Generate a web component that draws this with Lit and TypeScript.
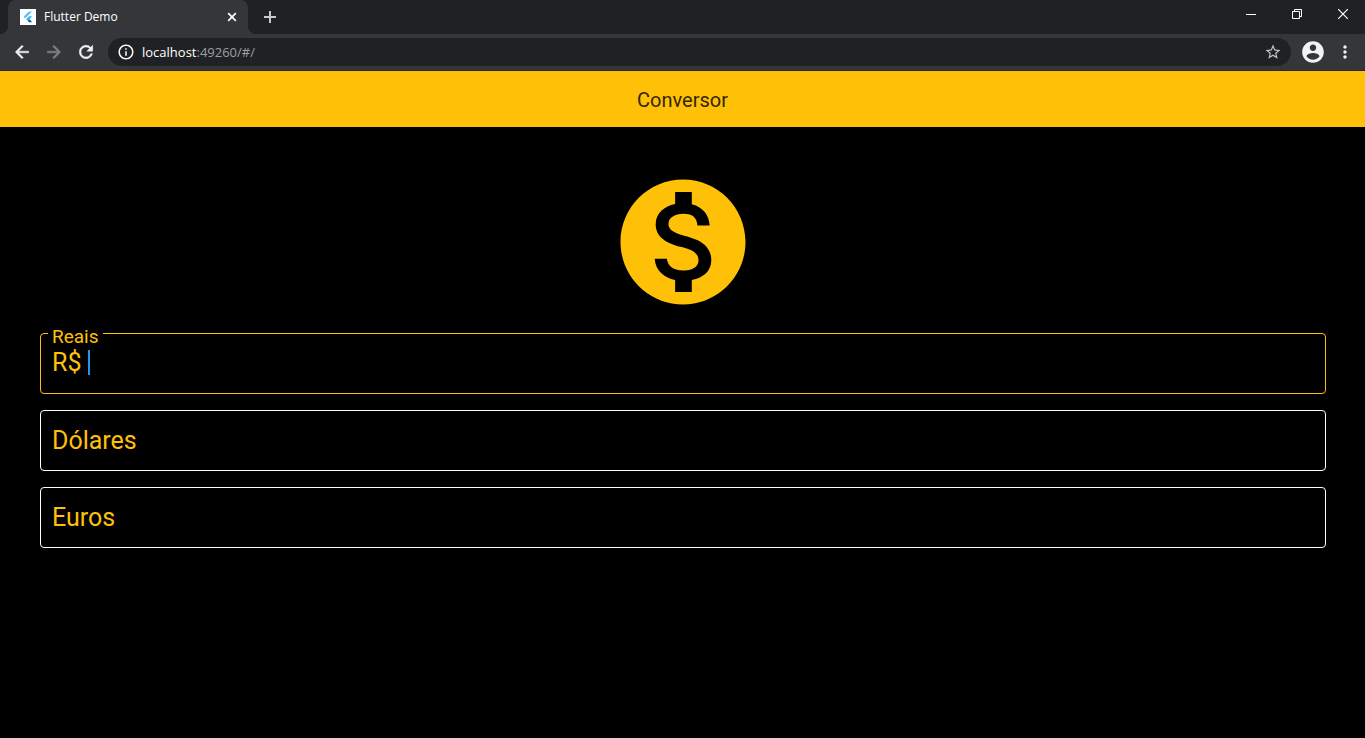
import { LitElement, html, css, svg } from "lit";
import { customElement } from "lit/decorators.js";

const icon = (d: string, cls = "") =>
  html`<svg class=${cls} viewBox="0 0 24 24" aria-hidden="true">${svg`<path d=${d} />`}</svg>`;

const BACK = "M20 11H7.83l5.59-5.59L12 4l-8 8 8 8 1.41-1.41L7.83 13H20v-2z";
const FORWARD = "M12 4l-1.41 1.41L16.17 11H4v2h12.17l-5.58 5.59L12 20l8-8z";
const RELOAD =
  "M17.65 6.35C16.2 4.9 14.21 4 12 4c-4.42 0-7.99 3.58-7.99 8s3.57 8 7.99 8c3.73 0 6.84-2.55 7.73-6h-2.08c-.82 2.33-3.04 4-5.65 4-3.31 0-6-2.69-6-6s2.69-6 6-6c1.66 0 3.14.69 4.22 1.78L13 11h7V4l-2.35 2.35z";
const INFO =
  "M11 17h2v-6h-2v6zm1-15C6.48 2 2 6.48 2 12s4.48 10 10 10 10-4.48 10-10S17.52 2 12 2zm0 18c-4.41 0-8-3.59-8-8s3.59-8 8-8 8 3.59 8 8-3.59 8-8 8zM11 9h2V7h-2v2z";
const STAR =
  "M22 9.24l-7.19-.62L12 2 9.19 8.63 2 9.24l5.46 4.73L5.82 21 12 17.27 18.18 21l-1.63-7.03L22 9.24zM12 15.4l-3.76 2.27 1-4.28-3.32-2.88 4.38-.38L12 6.1l1.71 4.04 4.38.38-3.32 2.88 1 4.28L12 15.4z";
const PERSON =
  "M12 2C6.48 2 2 6.48 2 12s4.48 10 10 10 10-4.48 10-10S17.52 2 12 2zm0 3c1.66 0 3 1.34 3 3s-1.34 3-3 3-3-1.34-3-3 1.34-3 3-3zm0 14.2c-2.5 0-4.71-1.28-6-3.22.03-1.99 4-3.08 6-3.08 1.99 0 5.97 1.09 6 3.08-1.29 1.94-3.5 3.22-6 3.22z";
const MORE =
  "M12 8c1.1 0 2-.9 2-2s-.9-2-2-2-2 .9-2 2 .9 2 2 2zm0 2c-1.1 0-2 .9-2 2s.9 2 2 2 2-.9 2-2-.9-2-2-2zm0 6c-1.1 0-2 .9-2 2s.9 2 2 2 2-.9 2-2-.9-2-2-2z";
const MONEY =
  "M12 2C6.48 2 2 6.48 2 12s4.48 10 10 10 10-4.48 10-10S17.52 2 12 2zm1.41 16.09V20h-2.67v-1.93c-1.71-.36-3.16-1.46-3.27-3.4h1.96c.1 1.05.82 1.87 2.65 1.87 1.96 0 2.4-.98 2.4-1.59 0-.83-.44-1.61-2.67-2.14-2.48-.6-4.18-1.62-4.18-3.67 0-1.72 1.39-2.84 3.11-3.21V4h2.67v1.95c1.86.45 2.79 1.86 2.85 3.39H14.3c-.05-1.11-.64-1.87-2.22-1.87-1.5 0-2.4.68-2.4 1.64 0 .84.65 1.39 2.67 1.91s4.18 1.39 4.18 3.91c-.02 1.83-1.38 2.83-3.12 3.16z";

@customElement("browser-chrome")
export class BrowserChrome extends LitElement {
  static styles = css`
    :host {
      display: block;
      font-family: "Open Sans", "Noto Sans", sans-serif;
      color: #fff;
      background: #202124;
    }
    button {
      display: flex;
      align-items: center;
      justify-content: center;
      padding: 0;
      border: 0;
      background: none;
      color: inherit;
    }
    svg {
      display: block;
      flex: none;
      fill: currentColor;
    }
    .strip {
      display: flex;
      height: 34px;
      padding-left: 8px;
    }
    .tab {
      position: relative;
      display: flex;
      align-items: center;
      gap: 8px;
      width: 240px;
      padding: 0 8px 0 12px;
      box-sizing: border-box;
      background: #35363a;
      border-radius: 8px 8px 0 0;
      font-size: 12px;
      line-height: 16px;
    }
    .tab::before,
    .tab::after {
      content: "";
      position: absolute;
      bottom: 0;
      width: 8px;
      height: 8px;
    }
    .tab::before {
      right: 100%;
      background: radial-gradient(circle at 0 0, transparent 8px, #35363a 8px);
    }
    .tab::after {
      left: 100%;
      background: radial-gradient(circle at 100% 0, transparent 8px, #35363a 8px);
    }
    .title {
      flex: 1;
    }
    .close,
    .favicon {
      width: 16px;
      height: 16px;
    }
    .stroke {
      fill: none;
      stroke: currentColor;
    }
    .add {
      width: 28px;
      margin-left: 8px;
      color: #c8c9cb;
    }
    .windows {
      display: flex;
      margin-left: auto;
    }
    .windows button {
      width: 46px;
      height: 28px;
      padding-left: 2px;
    }
    .toolbar {
      display: flex;
      align-items: center;
      height: 36px;
      padding: 0 10px 0 6px;
      background: #35363a;
      border-bottom: 1px solid #27282b;
    }
    .nav {
      width: 32px;
      height: 32px;
      color: #f1f3f4;
    }
    .nav svg {
      width: 20px;
      height: 20px;
      stroke: currentColor;
      stroke-width: 0.6;
    }
    .nav[disabled] {
      color: #818286;
    }
    .address {
      display: flex;
      flex: 1;
      align-items: center;
      height: 28px;
      margin: 0 8px 0 6px;
      padding: 0 9px;
      border-radius: 14px;
      background: #202124;
      font-size: 13px;
    }
    .address svg {
      width: 18px;
      height: 18px;
    }
    .url {
      flex: 1;
      margin-left: 7px;
      color: #fff;
      text-decoration: none;
    }
    .path {
      color: #9aa0a6;
    }
    .star {
      color: #c4c5c8;
    }
    .profile {
      width: 28px;
      height: 28px;
      color: #f1f3f4;
    }
    .profile svg {
      width: 26px;
      height: 26px;
    }
    .menu {
      width: 20px;
      height: 28px;
      margin-left: 8px;
      color: #f1f3f4;
    }
    .menu svg {
      width: 20px;
      height: 20px;
    }
  `;

  render() {
    return html`
      <div class="strip">
        <div class="tab">
          <svg class="favicon" viewBox="0 0 16 16" aria-hidden="true">
            <rect width="16" height="16" fill="#fff" />
            <path d="M8.8 2.4h3.2L5.2 9.4 3.5 7.8z" fill="#54c5f8" />
            <path d="M9 7.2h3.2L9.4 10.2 7.8 11.8 6.2 10.2z" fill="#35b2f0" />
            <path d="M7.8 11.8l1.6-1.6 2.8 3H9.2z" fill="#01579b" />
          </svg>
          <span class="title">Flutter Demo</span>
          <button class="close" aria-label="Close tab">
            <svg class="close stroke" viewBox="0 0 16 16"><path d="M4.2 4.2l7.6 7.6M11.8 4.2l-7.6 7.6" stroke-width="1.7" /></svg>
          </button>
        </div>
        <button class="add" aria-label="New tab">
          <svg class="stroke" width="16" height="16" viewBox="0 0 16 16"><path d="M8 2v12M2 8h12" stroke-width="2" /></svg>
        </button>
        <div class="windows">
          <button aria-label="Minimize">
            <svg class="stroke" width="10" height="10" viewBox="0 0 10 10"><path d="M0 5.5h10" /></svg>
          </button>
          <button aria-label="Restore">
            <svg class="stroke" width="10" height="10" viewBox="0 0 10 10"><path d="M.5 2.5h7v7h-7zM2.5 2.5v-2h7v7h-2" /></svg>
          </button>
          <button aria-label="Close window">
            <svg class="stroke" width="10" height="10" viewBox="0 0 10 10"><path d="M0 0l10 10M10 0L0 10" stroke-width="1.2" /></svg>
          </button>
        </div>
      </div>
      <div class="toolbar">
        <button class="nav" aria-label="Back">${icon(BACK)}</button>
        <button class="nav" aria-label="Forward" disabled>${icon(FORWARD)}</button>
        <button class="nav" aria-label="Reload">${icon(RELOAD)}</button>
        <div class="address">
          ${icon(INFO)}
          <a class="url" href="#/">localhost<span class="path">:49260/#/</span></a>
          <button class="star" aria-label="Bookmark">${icon(STAR)}</button>
        </div>
        <button class="profile" aria-label="Profile">${icon(PERSON)}</button>
        <button class="menu" aria-label="Menu">${icon(MORE)}</button>
      </div>
    `;
  }
}

@customElement("app-root")
export class AppRoot extends LitElement {
  static styles = css`
    :host {
      display: flex;
      flex-direction: column;
      min-height: 100vh;
      background: #000;
      color: #ffc107;
      font-family: Roboto, sans-serif;
    }
    .appbar {
      display: flex;
      align-items: center;
      justify-content: center;
      height: 56px;
      background: #ffc107;
    }
    .heading {
      margin: 0;
      padding-top: 2px;
      color: #332701;
      font-size: 20px;
      font-weight: 400;
    }
    .content {
      display: flex;
      flex-direction: column;
      gap: 16px;
      padding: 40px 39px 40px 40px;
    }
    .money {
      display: block;
      align-self: center;
      width: 150px;
      height: 150px;
      fill: #ffc107;
    }
    .field {
      position: relative;
      display: flex;
      align-items: center;
      height: 61px;
      box-sizing: border-box;
      padding: 0 11px;
      border: 1px solid #fff;
      border-radius: 4px;
      font-size: 25px;
      line-height: 28px;
    }
    .active {
      align-items: flex-start;
      padding-top: 15px;
      border-color: #ffc107;
    }
    .floating {
      position: absolute;
      top: -8px;
      left: 7px;
      padding: 0 4px;
      background: #000;
      font-size: 19px;
      line-height: 22px;
    }
    .caret {
      width: 2px;
      height: 25px;
      margin: 1px 0 0 7px;
      background: #2196f3;
    }
    .input {
      flex: 1;
      min-width: 0;
      padding: 0;
      border: 0;
      outline: 0;
      background: none;
      color: inherit;
      font: inherit;
    }
  `;

  render() {
    return html`
      <browser-chrome></browser-chrome>
      <header class="appbar"><h1 class="heading">Conversor</h1></header>
      <main class="content">
        ${icon(MONEY, "money")}
        <div class="field active">
          <label class="floating" for="reais">Reais</label>
          <span>R$</span>
          <span class="caret"></span>
          <input class="input" id="reais" inputmode="decimal" />
        </div>
        <div class="field">
          <label for="dolares">Dólares</label>
          <input class="input" id="dolares" inputmode="decimal" />
        </div>
        <div class="field">
          <label for="euros">Euros</label>
          <input class="input" id="euros" inputmode="decimal" />
        </div>
      </main>
    `;
  }
}
